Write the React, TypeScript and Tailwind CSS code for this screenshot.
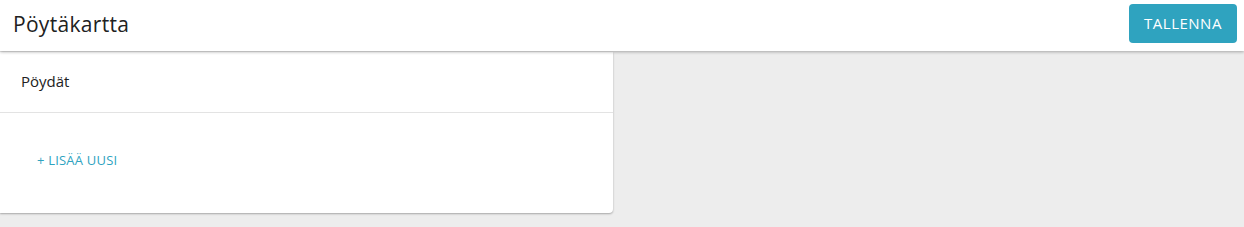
export default function App() {
  return (
    <div className="min-h-screen bg-[#ededed] font-['Open_Sans',sans-serif]">
      <header className="relative z-10 flex h-[51px] items-start justify-between bg-white pl-[13px] pr-[7px] shadow-[0_1px_3px_rgba(0,0,0,0.3)]">
        <h1 className="mt-[9px] text-[21px] font-medium leading-[30px] tracking-[0.3px] text-[#212121]">Pöytäkartta</h1>
        <button className="mt-[4px] h-[39px] w-[108px] rounded-[4px] bg-[#2fa3bf] text-[15px] uppercase tracking-[0.5px] text-white">
          Tallenna
        </button>
      </header>
      <div className="mt-[1px] w-[613px] rounded-br-[4px] bg-white shadow-[0_1px_2px_rgba(0,0,0,0.3)]">
        <div className="flex h-[61px] items-center border-b border-[#e3e3e3] px-[21px] pb-[2px]">
          <span className="text-[15px] font-medium text-[#212121]">Pöydät</span>
        </div>
        <div className="flex h-[100px] items-center px-[37px] pb-[5px]">
          <button className="text-[13px] uppercase tracking-[0.2px] text-[#2fa3bf]">+ Lisää uusi</button>
        </div>
      </div>
    </div>
  )
}
